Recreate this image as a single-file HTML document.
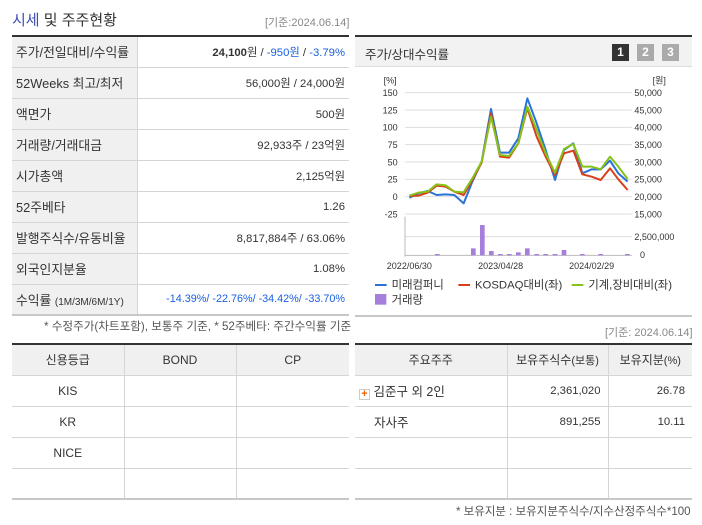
<!DOCTYPE html>
<html><head><meta charset="utf-8"><style>
*{margin:0;padding:0;box-sizing:border-box}
body{width:702px;height:525px;background:#fff;font-family:"Liberation Sans","Noto Sans CJK KR",sans-serif;font-size:12px;color:#333;position:relative;overflow:hidden}
.a{position:absolute}
table{border-collapse:collapse;position:absolute;table-layout:fixed}
td,th{font-weight:normal;height:31px;border-bottom:1px solid #d5d5d5;white-space:nowrap}
.blue{color:#1a5fe0}
.lt td:first-child{font-size:12.8px}
.lt td+td{font-size:11.3px}
</style></head><body>
<div class="a" style="left:12px;top:9px;font-size:15px;color:#333"><span style="color:#3b4fb5">시세</span> 및 주주현황</div>
<div class="a" style="left:265px;top:14px;font-size:11px;color:#888">[기준:2024.06.14]</div>

<table class="lt" style="left:12px;top:35px;width:337px;border-top:2px solid #333;border-bottom:2px solid #c8c8c8">
<colgroup><col style="width:125px"><col></colgroup>
<tr><td style="background:#f0f0f0;padding-left:4px;border-right:1px solid #d5d5d5">주가/전일대비/수익률</td><td style="text-align:right;padding-right:4px"><b>24,100</b>원 / <span class="blue">-950원</span> / <span class="blue">-3.79%</span></td></tr>
<tr><td style="background:#f0f0f0;padding-left:4px;border-right:1px solid #d5d5d5">52Weeks 최고/최저</td><td style="text-align:right;padding-right:4px">56,000원 / 24,000원</td></tr>
<tr><td style="background:#f0f0f0;padding-left:4px;border-right:1px solid #d5d5d5">액면가</td><td style="text-align:right;padding-right:4px">500원</td></tr>
<tr><td style="background:#f0f0f0;padding-left:4px;border-right:1px solid #d5d5d5">거래량/거래대금</td><td style="text-align:right;padding-right:4px">92,933주 / 23억원</td></tr>
<tr><td style="background:#f0f0f0;padding-left:4px;border-right:1px solid #d5d5d5">시가총액</td><td style="text-align:right;padding-right:4px">2,125억원</td></tr>
<tr><td style="background:#f0f0f0;padding-left:4px;border-right:1px solid #d5d5d5">52주베타</td><td style="text-align:right;padding-right:4px">1.26</td></tr>
<tr><td style="background:#f0f0f0;padding-left:4px;border-right:1px solid #d5d5d5">발행주식수/유동비율</td><td style="text-align:right;padding-right:4px">8,817,884주 / 63.06%</td></tr>
<tr><td style="background:#f0f0f0;padding-left:4px;border-right:1px solid #d5d5d5">외국인지분율</td><td style="text-align:right;padding-right:4px">1.08%</td></tr>
<tr><td style="background:#f0f0f0;padding-left:4px;border-right:1px solid #d5d5d5;border-bottom:none">수익률 <span style="font-size:10px">(1M/3M/6M/1Y)</span></td><td class="blue" style="text-align:right;padding-right:4px;font-size:10.8px;border-bottom:none">-14.39%/ -22.76%/ -34.42%/ -33.70%</td></tr>
</table>
<div class="a" style="left:44px;top:318px;font-size:11.6px;color:#555">* 수정주가(차트포함), 보통주 기준, * 52주베타: 주간수익률 기준</div>

<table style="left:12px;top:343px;width:337px;border-top:2px solid #333;border-bottom:2px solid #c8c8c8;text-align:center">
<colgroup><col style="width:112px"><col style="width:112px"><col></colgroup>
<tr style="background:#f0f0f0"><td style="border-right:1px solid #d5d5d5">신용등급</td><td style="border-right:1px solid #d5d5d5">BOND</td><td>CP</td></tr>
<tr><td style="border-right:1px solid #d5d5d5">KIS</td><td style="border-right:1px solid #d5d5d5"></td><td></td></tr>
<tr><td style="border-right:1px solid #d5d5d5">KR</td><td style="border-right:1px solid #d5d5d5"></td><td></td></tr>
<tr><td style="border-right:1px solid #d5d5d5">NICE</td><td style="border-right:1px solid #d5d5d5"></td><td></td></tr>
<tr><td style="border-right:1px solid #d5d5d5;border-bottom:none"></td><td style="border-right:1px solid #d5d5d5;border-bottom:none"></td><td style="border-bottom:none"></td></tr>
</table>

<div class="a" style="left:355px;top:35px;width:337px;height:282px;border-top:2px solid #333;border-bottom:2px solid #c8c8c8"></div>
<div class="a" style="left:355px;top:37px;width:337px;height:30px;background:#f2f2f2;border-bottom:1px solid #ddd"></div>
<div class="a" style="left:365px;top:44px;font-size:12.5px">주가/상대수익률</div>
<div class="a" style="left:612px;top:44px;width:17px;height:17px;background:#333;color:#fff;font-weight:bold;text-align:center;line-height:17px">1</div>
<div class="a" style="left:637px;top:44px;width:17px;height:17px;background:#aaa;color:#fff;font-weight:bold;text-align:center;line-height:17px">2</div>
<div class="a" style="left:662px;top:44px;width:17px;height:17px;background:#aaa;color:#fff;font-weight:bold;text-align:center;line-height:17px">3</div>
<svg class="a" style="left:355px;top:30px" width="347" height="290" viewBox="0 0 1041 870" font-family="Liberation Sans, Noto Sans CJK KR, sans-serif" font-size="27" fill="#333">
<g stroke="#ddd" stroke-width="3">
<line x1="150" x2="830" y1="188" y2="188"/><line x1="150" x2="830" y1="240" y2="240"/><line x1="150" x2="830" y1="292" y2="292"/><line x1="150" x2="830" y1="344" y2="344"/><line x1="150" x2="830" y1="396" y2="396"/><line x1="150" x2="830" y1="448" y2="448"/><line x1="150" x2="830" y1="500" y2="500"/><line x1="150" x2="830" y1="552" y2="552"/><line x1="150" x2="830" y1="620" y2="620"/>
</g>
<line x1="150" x2="830" y1="676" y2="676" stroke="#bbb" stroke-width="3"/>
<line x1="150" x2="150" y1="560" y2="680" stroke="#bbb" stroke-width="3"/>
<g text-anchor="end"><text x="125" y="160">[%]</text><text x="128" y="198">150</text><text x="128" y="250">125</text><text x="128" y="302">100</text><text x="128" y="354">75</text><text x="128" y="406">50</text><text x="128" y="458">25</text><text x="128" y="510">0</text><text x="128" y="562">-25</text></g>
<g><text x="893" y="160">[원]</text><text x="838" y="198">50,000</text><text x="838" y="250">45,000</text><text x="838" y="302">40,000</text><text x="838" y="354">35,000</text><text x="838" y="406">30,000</text><text x="838" y="458">25,000</text><text x="838" y="510">20,000</text><text x="838" y="562">15,000</text><text x="838" y="630">2,500,000</text><text x="855" y="684">0</text></g>
<g fill="#a67fdc">
<rect x="240" y="672" width="14" height="4"/><rect x="348" y="655" width="14" height="21"/><rect x="375" y="585" width="14" height="91"/><rect x="402" y="663" width="14" height="13"/><rect x="429" y="672" width="14" height="4"/><rect x="456" y="672" width="14" height="4"/><rect x="483" y="667" width="14" height="9"/><rect x="510" y="655" width="14" height="21"/><rect x="538" y="672" width="14" height="4"/><rect x="565" y="672" width="14" height="4"/><rect x="593" y="672" width="14" height="4"/><rect x="620" y="660" width="14" height="16"/><rect x="675" y="672" width="14" height="4"/><rect x="730" y="672" width="14" height="4"/><rect x="810" y="672" width="14" height="4"/>
</g>
<g fill="none" stroke-width="6" stroke-linejoin="round">
<polyline stroke="#2a72d8" points="163,503 190,490 218,483 245,495 272,493 298,495 326,520 352,455 380,395 408,237 435,368 462,368 490,325 517,205 545,280 572,360 600,450 627,360 655,340 682,430 710,418 737,418 765,392 790,430 818,455"/>
<polyline stroke="#d8401a" points="163,498 190,497 218,488 245,467 272,470 298,485 326,495 352,450 380,398 408,250 435,380 462,383 490,340 517,235 545,320 572,380 600,435 627,370 655,362 682,433 710,440 737,450 765,415 790,448 818,480"/>
<polyline stroke="#86c21a" points="163,497 190,488 218,485 245,463 272,466 298,485 326,487 352,445 380,395 408,260 435,375 462,378 490,340 517,230 545,300 572,370 600,428 627,357 655,342 682,410 710,410 737,418 765,380 790,410 818,447"/>
</g>
<g text-anchor="middle"><text x="163" y="717">2022/06/30</text><text x="437" y="717">2023/04/28</text><text x="710" y="717">2024/02/29</text></g>
<g font-size="34">
<line x1="60" x2="95" y1="765" y2="765" stroke="#2a72d8" stroke-width="6"/><text x="110" y="776">미래컴퍼니</text>
<line x1="310" x2="345" y1="765" y2="765" stroke="#d8401a" stroke-width="6"/><text x="360" y="776">KOSDAQ대비(좌)</text>
<line x1="650" x2="685" y1="765" y2="765" stroke="#86c21a" stroke-width="6"/><text x="700" y="776">기계,장비대비(좌)</text>
<rect x="60" y="792" width="34" height="32" fill="#a67fdc"/><text x="110" y="820">거래량</text>
</g>
</svg>

<div class="a" style="left:605px;top:324px;font-size:11px;color:#888">[기준: 2024.06.14]</div>
<table style="left:355px;top:343px;width:337px;border-top:2px solid #333;border-bottom:2px solid #c8c8c8">
<colgroup><col style="width:152px"><col style="width:101px"><col></colgroup>
<tr style="background:#f0f0f0;text-align:center"><td style="border-right:1px solid #d5d5d5">주요주주</td><td style="border-right:1px solid #d5d5d5">보유주식수<span style="font-size:11px">(보통)</span></td><td>보유지분<span style="font-size:11px">(%)</span></td></tr>
<tr><td style="border-right:1px solid #d5d5d5;padding-left:4px;font-size:12.5px"><span style="display:inline-block;width:11px;height:11px;border:1px solid #ccc;background:#fff;color:#f06000;font-size:11px;line-height:9px;text-align:center;font-weight:bold;vertical-align:-1px">+</span> 김준구 외 2인</td><td style="border-right:1px solid #d5d5d5;text-align:right;padding-right:7px;font-size:11.3px">2,361,020</td><td style="text-align:right;padding-right:7px;font-size:11.3px">26.78</td></tr>
<tr><td style="border-right:1px solid #d5d5d5;padding-left:19px;font-size:12.5px">자사주</td><td style="border-right:1px solid #d5d5d5;text-align:right;padding-right:7px;font-size:11.3px">891,255</td><td style="text-align:right;padding-right:7px;font-size:11.3px">10.11</td></tr>
<tr><td style="border-right:1px solid #d5d5d5"></td><td style="border-right:1px solid #d5d5d5"></td><td></td></tr>
<tr><td style="border-right:1px solid #d5d5d5;border-bottom:none"></td><td style="border-right:1px solid #d5d5d5;border-bottom:none"></td><td style="border-bottom:none"></td></tr>
</table>
<div class="a" style="left:456px;top:503px;font-size:11.5px;color:#555">* 보유지분 : 보유지분주식수/지수산정주식수*100</div>
</body></html>
